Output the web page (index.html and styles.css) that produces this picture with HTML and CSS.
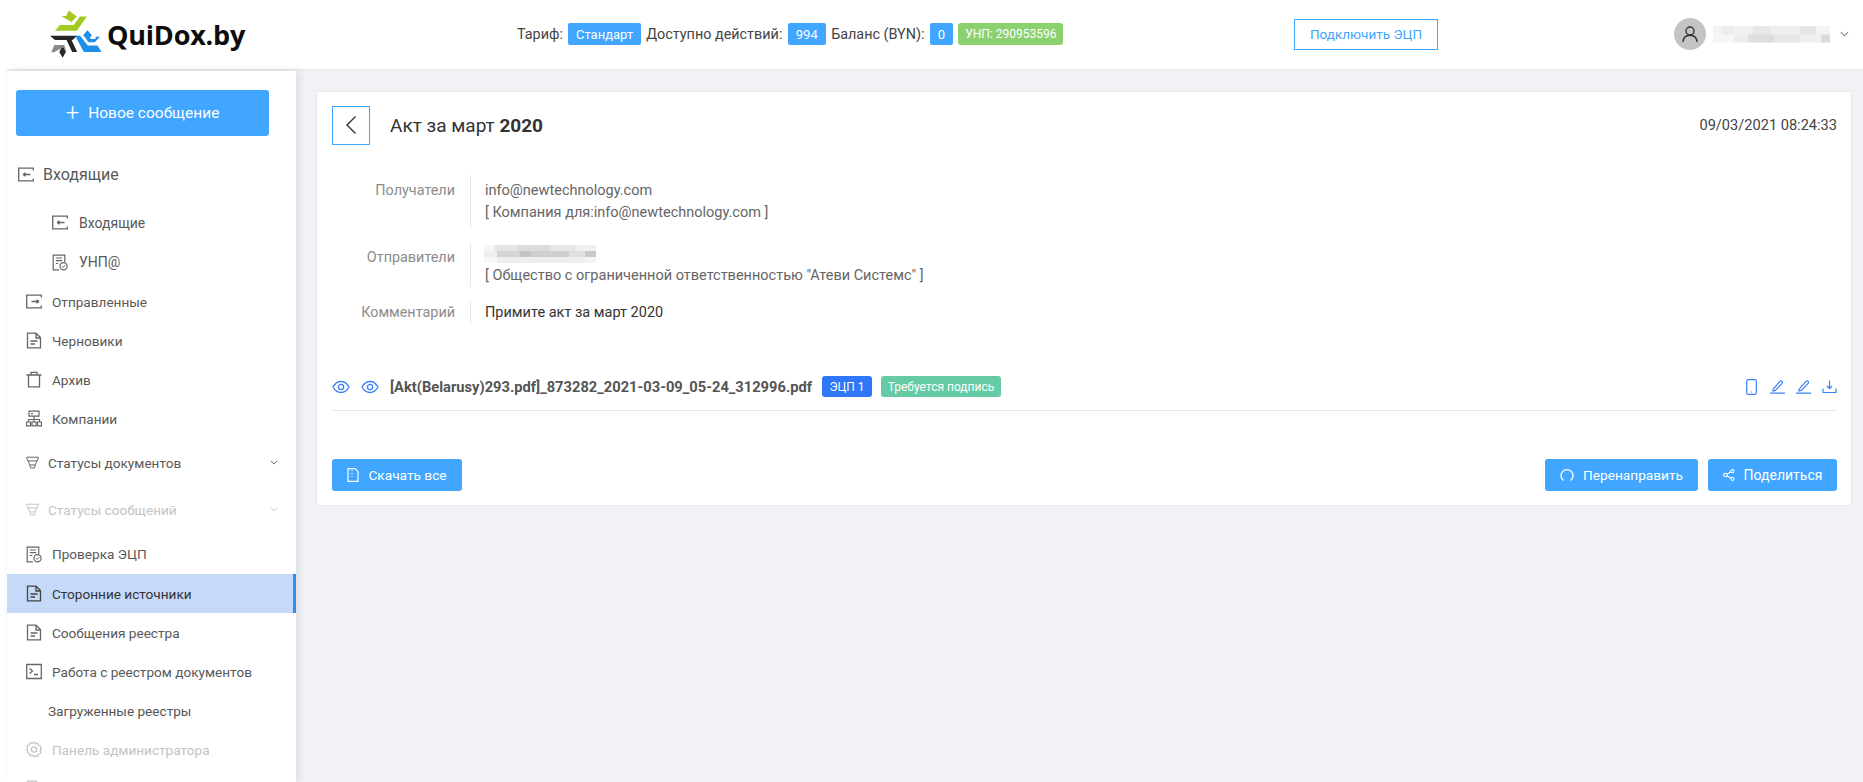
FILE: index.html
```html
<!DOCTYPE html>
<html lang="ru">
<head>
<meta charset="utf-8">
<title>QuiDox.by</title>
<link rel="stylesheet" href="styles.css">
</head>
<body>
<svg class="defs" aria-hidden="true">
  <symbol id="i-in" viewBox="0 0 16 16"><path d="M15.300 4V1.700H.7v12.600h14.600V12M5 8h7.500M5 8l2.500-1.800M5 8l2.500 1.800" fill="none" stroke="currentColor" stroke-width="1.300"/></symbol>
  <symbol id="i-out" viewBox="0 0 16 16"><path d="M15.300 4V1.700H.7v12.600h14.600V12M5.500 8H13M13 8l-2.500-1.800M13 8l-2.500 1.800" fill="none" stroke="currentColor" stroke-width="1.300"/></symbol>
  <symbol id="i-doc" viewBox="0 0 16 16"><path d="M1.500.7h8.500L14.500 5v10.300h-13zM10 .7V5.500h4.500M4.500 8.500h7M4.500 11.500h4.500" fill="none" stroke="currentColor" stroke-width="1.300"/></symbol>
  <symbol id="i-trash" viewBox="0 0 16 16"><path d="M.5 3.500h15M5 3.500V.9h6v2.600M2.500 3.500v11.800h11V3.500" fill="none" stroke="currentColor" stroke-width="1.300"/></symbol>
  <symbol id="i-org" viewBox="0 0 16 16"><path d="M3 .7h10v5H3zM5 3.200h2M8 5.700v3.300M2.500 11.500V9h11v2.500M8 9v2.500M.5 11.500h4v3.800h-4zM6 11.500h4v3.800H6zM11.500 11.500h4v3.800h-4z" fill="none" stroke="currentColor" stroke-width="1.200"/></symbol>
  <symbol id="i-filter" viewBox="0 0 16 16"><path d="M.8 1.500h14.400L14 6H2zM3 6l1.300 5h7.400L13 6M4.800 11l.7 3.700h5l.7-3.700" fill="none" stroke="currentColor" stroke-width="1.200"/></symbol>
  <symbol id="i-check" viewBox="0 0 16 16"><path d="M7 15.300H1.200V.7h11.600v7M3.800 3.500h6.400M3.800 6.200h6.400M3.800 9h2.500" fill="none" stroke="currentColor" stroke-width="1.200"/><circle cx="11.500" cy="11.700" r="3.600" fill="none" stroke="currentColor" stroke-width="1.200"/><path d="M9.900 11.700l1.200 1.200 2.100-2.100" fill="none" stroke="currentColor"/></symbol>
  <symbol id="i-term" viewBox="0 0 16 16"><path d="M.7 1h14.600v14H.7zM3.500 5l3 2.500-3 2.500M8 11h4" fill="none" stroke="currentColor" stroke-width="1.300"/></symbol>
  <symbol id="i-gear" viewBox="0 0 16 16"><path d="M8 .5l1.500 1.800 2.300-.5.8 2.200 2.200.8-.5 2.300L15.700 8l-1.400 1.400.5 2.300-2.200.8-.8 2.200-2.300-.5L8 15.500l-1.500-1.800-2.300.5-.8-2.200-2.200-.8.500-2.300L.3 8l1.400-1.400-.5-2.300 2.200-.8.800-2.200 2.300.5z" fill="none" stroke="currentColor" stroke-width="1.200"/><circle cx="8" cy="8" r="2.700" fill="none" stroke="currentColor" stroke-width="1.200"/></symbol>
  <symbol id="i-chev" viewBox="0 0 10 6"><path d="M1 1l4 4 4-4" fill="none" stroke="currentColor" stroke-width="1.200"/></symbol>
  <symbol id="i-eye" viewBox="0 0 18 14"><path d="M1 7c2-3.600 4.800-5.500 8-5.500S15 3.400 17 7c-2 3.600-4.800 5.500-8 5.500S3 10.600 1 7z" fill="none" stroke="currentColor" stroke-width="1.300"/><circle cx="9" cy="7" r="2.600" fill="none" stroke="currentColor" stroke-width="1.300"/></symbol>
  <symbol id="i-pen" viewBox="0 0 14 14"><path d="M3 9.500L9.300 2.200c.6-.6 1.400-.6 1.900-.1.600.5.600 1.300.1 1.900L5 10.600l-2.300.5zM0 13.200h14" fill="none" stroke="currentColor" stroke-width="1.100"/></symbol>
  <symbol id="i-down" viewBox="0 0 15 14"><path d="M7.500 1v8M5 6.500l2.500 2.700L10 6.500M1 9v4h13V9" fill="none" stroke="currentColor" stroke-width="1.200"/></symbol>
</svg>

<header class="topbar">
  <a class="brand">
    <svg class="brand-mark" viewBox="150 20 160 150" aria-hidden="true">
      <path fill="#a4c91f" d="M207 24l24 18-16 17-31-18h15zM261 42l-30 43h-66l15-17h42l18-26z"/>
      <path fill="#262626" d="M150 100h82l-14 13h-53zM200 113h15l17 36h-15zM188 130l10 19-10 18-10-18z"/>
      <path fill="#8a8a8a" d="M163 128h30l7 22-10-15-28 15h-8z"/>
      <path fill="#1d8fe8" d="M263 84l14 15-14 15-13-15zM226 100h15l23 30h29l13 19h-54zM301 103l-16 17h-19l-9-13h13l4 3h13l1-7z"/>
    </svg>
    <span class="brand-name">QuiDox.by</span>
  </a>
  <div class="plan">
    <span>Тариф:</span><span class="tag tag-plan">Стандарт</span>
    <span>Доступно действий:</span><span class="tag tag-count">994</span>
    <span>Баланс (BYN):</span><span class="tag tag-zero">0</span>
    <span class="tag tag-green">УНП: 290953596</span>
  </div>
  <button class="connect">Подключить ЭЦП</button>
  <div class="user">
    <span class="avatar">
      <svg viewBox="0 0 18 18" width="18" height="18" aria-hidden="true"><circle cx="9" cy="6" r="4" fill="none" stroke="#333" stroke-width="1.400"/><path d="M2 17c.3-4 3-6.700 7-6.700s6.700 2.700 7 6.700" fill="none" stroke="#333" stroke-width="1.400"/></svg>
    </span>
    <span class="blur blur-user"></span>
    <svg class="user-chev"><use href="#i-chev"/></svg>
  </div>
</header>

<div class="layout">
  <aside class="sidebar">
    <button class="new-msg"><span class="plus">+</span>Новое сообщение</button>
    <nav class="nav">
      <a class="nav-item head"><svg class="ico"><use href="#i-in"/></svg>Входящие</a>
      <a class="nav-item sub first-sub"><svg class="ico"><use href="#i-in"/></svg>Входящие</a>
      <a class="nav-item sub"><svg class="ico"><use href="#i-check"/></svg>УНП@</a>
      <a class="nav-item"><svg class="ico"><use href="#i-out"/></svg>Отправленные</a>
      <a class="nav-item"><svg class="ico"><use href="#i-doc"/></svg>Черновики</a>
      <a class="nav-item"><svg class="ico"><use href="#i-trash"/></svg>Архив</a>
      <a class="nav-item"><svg class="ico"><use href="#i-org"/></svg>Компании</a>
      <a class="nav-item group group-docs"><svg class="ico ico-sm"><use href="#i-filter"/></svg>Статусы документов<svg class="chev"><use href="#i-chev"/></svg></a>
      <a class="nav-item group group-msgs off"><svg class="ico ico-sm"><use href="#i-filter"/></svg>Статусы сообщений<svg class="chev"><use href="#i-chev"/></svg></a>
      <a class="nav-item after-group"><svg class="ico"><use href="#i-check"/></svg>Проверка ЭЦП</a>
      <a class="nav-item active"><svg class="ico"><use href="#i-doc"/></svg>Сторонние источники</a>
      <a class="nav-item"><svg class="ico"><use href="#i-doc"/></svg>Сообщения реестра</a>
      <a class="nav-item"><svg class="ico"><use href="#i-term"/></svg>Работа с реестром документов</a>
      <a class="nav-item plain">Загруженные реестры</a>
      <a class="nav-item off"><svg class="ico"><use href="#i-gear"/></svg>Панель администратора</a>
      <a class="nav-item off"><svg class="ico"><use href="#i-doc"/></svg></a>
    </nav>
  </aside>

  <main class="main">
    <section class="card">
      <div class="title-row">
        <button class="back" aria-label="Назад">
          <svg viewBox="0 0 12 20" width="12" height="20" aria-hidden="true"><path d="M10.500 1.500L2 10l8.500 8.500" fill="none" stroke="#333" stroke-width="1.400"/></svg>
        </button>
        <h1 class="title">Акт за март <b>2020</b></h1>
        <time class="date">09/03/2021 08:24:33</time>
      </div>

      <dl class="meta">
        <div class="meta-row meta-first">
          <dt>Получатели</dt>
          <dd><div>info@newtechnology.com</div><div>[ Компания для:info@newtechnology.com ]</div></dd>
        </div>
        <div class="meta-row">
          <dt>Отправители</dt>
          <dd><div class="blur-line"><span class="blur blur-sender"></span></div><div>[ Общество с ограниченной ответственностью "Атеви Системс" ]</div></dd>
        </div>
        <div class="meta-row meta-last">
          <dt>Комментарий</dt>
          <dd class="dark">Примите акт за март 2020</dd>
        </div>
      </dl>

      <div class="file">
        <svg class="eye"><use href="#i-eye"/></svg>
        <svg class="eye"><use href="#i-eye"/></svg>
        <span class="file-name">[Akt(Belarusy)293.pdf]_873282_2021-03-09_05-24_312996.pdf</span>
        <span class="pill pill-blue">ЭЦП 1</span>
        <span class="pill pill-teal">Требуется подпись</span>
        <span class="file-tools">
          <svg class="tablet" viewBox="0 0 11 16" aria-hidden="true"><rect x=".7" y=".7" width="9.600" height="14.600" rx="1.500" fill="none" stroke="currentColor" stroke-width="1.200"/><path d="M5 13h1" stroke="currentColor"/></svg>
          <svg class="tool"><use href="#i-pen"/></svg>
          <svg class="tool"><use href="#i-pen"/></svg>
          <svg class="tool"><use href="#i-down"/></svg>
        </span>
      </div>

      <div class="actions">
        <button class="btn btn-dl">
          <svg viewBox="0 0 12 14" width="12" height="14" aria-hidden="true"><path d="M1 .7h7l3 3v9.600H1zM5 2v1M5 5v1M5 8v1" fill="none" stroke="#fff" stroke-width="1.200"/></svg>
          Скачать все
        </button>
        <span class="spacer"></span>
        <button class="btn btn-fwd">
          <svg viewBox="0 0 14 14" width="14" height="14" aria-hidden="true"><path d="M3.500 12.500A6 6 0 1 1 10.500 12.500" fill="none" stroke="#fff" stroke-width="1.300"/></svg>
          Перенаправить
        </button>
        <button class="btn btn-share">
          <svg viewBox="0 0 14 14" width="12" height="12" aria-hidden="true"><circle cx="2.800" cy="7" r="2" fill="none" stroke="#fff" stroke-width="1.300"/><circle cx="11" cy="2.500" r="1.800" fill="none" stroke="#fff" stroke-width="1.300"/><circle cx="11" cy="11.500" r="1.800" fill="none" stroke="#fff" stroke-width="1.300"/><path d="M4.600 6l4.700-2.700M4.600 8l4.700 2.700" stroke="#fff" stroke-width="1.300"/></svg>
          Поделиться
        </button>
      </div>
    </section>
  </main>
</div>
</body>
</html>
```
FILE: styles.css
```css
* { box-sizing: border-box; }
html, body { margin: 0; height: 782px; overflow: hidden; }
body { background: #fff; font-family: Roboto, "Liberation Sans", sans-serif; font-size: 14px; color: #555; }
.defs { display: none; }
button { font-family: inherit; cursor: pointer; }

/* top bar */
.topbar { display: flex; align-items: center; height: 71px; margin-left: 7px; padding: 0 0 1px 43px; border-bottom: 2px solid #eaebee; }
.brand { display: flex; align-items: center; width: 467px; flex: none; }
.brand-mark { width: 53px; height: 50px; margin-right: 4px; flex: none; }
.brand-name { font-family: "Open Sans", sans-serif; font-weight: 700; font-size: 27px; color: #0d0d0d; letter-spacing: -.2px; }
.plan { display: flex; align-items: center; width: 777px; flex: none; color: #444; white-space: nowrap; font-size: 14.400px; }
.tag { display: inline-flex; align-items: center; justify-content: center; height: 22px; border-radius: 2px; color: #fff; font-size: 13px; background: #40a6ff; margin: 0 5.400px; }
.tag-plan { width: 72.500px; }
.tag-count { width: 38px; }
.tag-zero { width: 23px; }
.tag-green { width: 105px; margin: 0; background: #8bd16f; font-size: 12px; border-radius: 3px; }
.connect { flex: none; width: 144px; height: 31px; padding: 0; background: #fff; border: 1px solid #40a6ff; color: #40a6ff; font-size: 13.500px; }
.user { display: flex; align-items: center; margin-left: 236px; }
.avatar { display: flex; align-items: center; justify-content: center; width: 32px; height: 32px; border-radius: 50%; background: #c4c4c4; }
.blur { display: block; }
.blur-user { width: 117px; height: 17px; margin-left: 7px; background:
  linear-gradient(90deg, #f4f4f4 0 8%, #ececec 8% 18%, #f1f1f1 18% 34%, #e8e8e8 34% 50%, #efefef 50% 74%, #e6e6e6 74% 88%, #f3f3f3 88%) top / 100% 50% no-repeat,
  linear-gradient(90deg, #f6f6f6 0 18%, #ededed 18% 30%, #dedede 30% 52%, #e6e6e6 52% 74%, #efefef 74% 92%, #dcdcdc 92%) bottom / 100% 50% no-repeat; }
.user-chev { width: 9px; height: 6px; margin-left: 10px; color: #888; }

/* page */
.layout { display: flex; height: 711px; padding-left: 7px; }
.sidebar { width: 289px; flex: none; position: relative; z-index: 1; background: #fff; box-shadow: 3px 0 8px rgba(60, 70, 100, .12); }
.new-msg { display: flex; align-items: center; justify-content: center; width: 253px; height: 46px; margin: 19px 0 0 9px; border: 0; border-radius: 3px; background: #40a6ff; color: #fff; font-size: 15.500px; }
.plus { font-size: 24px; font-weight: 300; line-height: 1; margin-right: 9px; }
.nav { display: flex; flex-direction: column; }
.nav-item { display: flex; align-items: center; height: 39px; flex: none; padding-left: 19px; color: #595959; white-space: nowrap; font-size: 13.600px; }
.ico { width: 16px; height: 17px; margin-right: 10px; flex: none; color: #666; }
.head { margin-top: 19px; padding-left: 11px; font-size: 16px; }
.head .ico { margin-right: 9px; }
.sub { padding-left: 45px; font-size: 14px; }
.sub .ico { margin-right: 11px; }
.first-sub { margin-top: 9px; }
.sub + .sub { height: 40px; }
.group { padding-left: 19px; }
.ico-sm { width: 13px; height: 13px; margin-right: 9px; }
.group-docs { margin-top: 5px; }
.group-msgs { margin-top: 8px; }
.chev { width: 8px; height: 5px; margin-left: auto; margin-right: 18px; color: #666; }
.after-group { margin-top: 5px; height: 40px; }
.off, .off .ico, .off .chev { color: #c4c4c4; }
.active { background: #c7d9f8; color: #333; border-right: 3px solid #2f8ff0; }
.active .ico { color: #444; }
.plain { padding-left: 41px; color: #555; }

.main { flex: 1; min-width: 0; background: #f0f2f5; padding: 20px 11px 0 20px; }
.card { display: flex; flex-direction: column; height: 415px; padding: 13px 14px 0 15px; background: #fff; border: 1px solid #e8eaec; }
.title-row { display: flex; align-items: center; height: 40px; }
.back { display: flex; align-items: center; justify-content: center; width: 38px; height: 39px; padding: 0; background: #fff; border: 1px solid #40a6ff; }
.title { flex: 1; margin: 0 0 0 20px; font-size: 19px; font-weight: 400; color: #333; }
.title b { font-weight: 700; }
.date { color: #444; font-size: 14.600px; }

.meta { margin: 30px 0 0; }
.meta-row { display: flex; margin-bottom: 15px; }
.meta-row dt { width: 138px; flex: none; padding: 4px 15px 0 0; text-align: right; color: #8c8c8c; line-height: 22px; font-size: 14.400px; }
.meta-row dd { margin: 0; padding: 0 0 0 14px; border-left: 1px solid #e4e6ea; line-height: 22px; color: #666; font-size: 14.500px; }
.meta-first dd { padding-top: 5px; padding-bottom: 4px; }
.meta-first dt { padding-top: 5px; }
.meta-last { margin-bottom: 0; }
.meta-last dt { padding-top: 0; }
.meta-last .dark { color: #333; }
.blur-line { height: 22px; display: flex; align-items: center; }
.blur-sender { width: 112px; height: 19px; margin-left: -1px; background:
  linear-gradient(90deg, #f5f5f5 0 10%, #e4e4e4 10% 30%, #dcdcdc 30% 60%, #e8e8e8 60% 82%, #f0f0f0 82%) top / 100% 33% no-repeat,
  linear-gradient(90deg, #eeeeee 0 12%, #d4d4d4 12% 32%, #c4c4c4 32% 42%, #cfcfcf 42% 76%, #e0e0e0 76% 90%, #c9c9c9 90%) center / 100% 34% no-repeat,
  linear-gradient(90deg, #f7f7f7 0 12%, #eeeeee 12% 90%, #f5f5f5 90%) bottom / 100% 33% no-repeat; }

.file { display: flex; align-items: center; height: 50px; margin-top: 37px; border-bottom: 1px solid #e4e6ea; padding-top: 2px; }
.eye { width: 18px; height: 14px; margin-right: 11px; color: #3b82f6; flex: none; }
.file-name { font-weight: 700; font-size: 14.700px; color: #555; margin-right: 10px; white-space: nowrap; }
.pill { display: inline-flex; align-items: center; justify-content: center; height: 21px; border-radius: 3px; color: #fff; font-size: 12px; }
.pill-blue { width: 50px; background: #2f77f6; margin-right: 9px; }
.pill-teal { width: 120px; background: #64cba5; }
.file-tools { display: flex; align-items: center; margin-left: auto; color: #3b82f6; }
.tablet { width: 11px; height: 16px; margin-right: 13px; }
.tool { width: 15px; height: 15px; margin-right: 11px; }
.tool:last-child { margin-right: 0; }

.actions { display: flex; align-items: flex-start; margin-top: 48px; }
.spacer { flex: 1; }
.btn { display: inline-flex; align-items: center; justify-content: center; gap: 9px; height: 32px; padding: 0; border: 0; border-radius: 3px; background: #40a6ff; color: #fff; font-size: 14px; }
.btn-dl { width: 130px; font-size: 13.700px; }
.btn-fwd { width: 153px; margin-right: 10px; font-size: 13.700px; }
.btn-share { width: 129px; }
```
